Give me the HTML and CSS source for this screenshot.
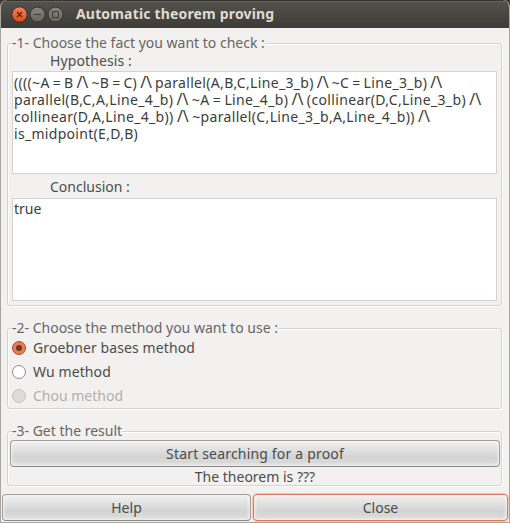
FILE: index.html
```html
<!DOCTYPE html>
<html lang="en">
<head>
<meta charset="utf-8">
<title>Automatic theorem proving</title>
<link rel="stylesheet" href="styles.css">
</head>
<body>
<div class="window">
  <header class="titlebar">
    <svg class="controls" width="54" height="18" viewBox="0 0 54 18">
      <defs>
        <linearGradient id="close" x1="0" y1="0" x2="0" y2="1"><stop offset="0" stop-color="#f4845d"/><stop offset="1" stop-color="#df4a16"/></linearGradient>
        <linearGradient id="grey" x1="0" y1="0" x2="0" y2="1"><stop offset="0" stop-color="#888680"/><stop offset="1" stop-color="#65635c"/></linearGradient>
      </defs>
      <g stroke="#33322e">
        <circle cx="9.5" cy="8.5" r="7.7" fill="url(#close)"/>
        <circle cx="27.5" cy="8.5" r="7.5" fill="url(#grey)"/>
        <circle cx="45.5" cy="8.5" r="7.5" fill="url(#grey)"/>
      </g>
      <path d="M7 6l5 5m0-5l-5 5" stroke="#54210f" stroke-width="1.2"/>
      <path d="M24 8.5h7M42.5 5.5h6v6h-6z" fill="none" stroke="#3c3b37"/>
    </svg>
    <h1>Automatic theorem proving</h1>
  </header>
  <main>
    <section class="group fact">
      <h2><span class="t-fact">-1- Choose the fact you want to check :</span></h2>
      <div class="label"><span class="t-hyp">Hypothesis :</span></div>
      <div class="textbox">
        <div class="l1">((((~A = B <i>/\</i> ~B = C) <i>/\</i> parallel(A,B,C,Line_3_b) <i>/\</i> ~C = Line_3_b) <i>/\</i></div>
        <div class="l2">parallel(B,C,A,Line_4_b) <i>/\</i> ~A = Line_4_b) <i>/\</i> (collinear(D,C,Line_3_b) <i>/\</i></div>
        <div class="l3">collinear(D,A,Line_4_b)) <i>/\</i> ~parallel(C,Line_3_b,A,Line_4_b)) <i>/\</i></div>
        <div class="l4">is_midpoint(E,D,B)</div>
      </div>
      <div class="label second"><span class="t-con">Conclusion :</span></div>
      <div class="textbox"><div>true</div></div>
    </section>
    <section class="group method">
      <h2><span class="t-method">-2- Choose the method you want to use :</span></h2>
      <div class="option"><b class="radio on"></b><span class="t-gro">Groebner bases method</span></div>
      <div class="option"><b class="radio"></b><span class="t-wu">Wu method</span></div>
      <div class="option off"><b class="radio"></b><span class="t-chou">Chou method</span></div>
    </section>
    <section class="group result">
      <h2><span class="t-get">-3- Get the result</span></h2>
      <div class="button start"><span class="t-start">Start searching for a proof</span></div>
      <p><span class="t-the">The theorem is ???</span></p>
    </section>
  </main>
  <footer>
    <div class="button"><span class="t-help">Help</span></div>
    <div class="button focus"><span class="t-close">Close</span></div>
  </footer>
</div>
</body>
</html>
```
FILE: styles.css
```css
* { box-sizing: border-box; }
body { margin: 0; width: 510px; height: 523px; overflow: hidden; background: #3c3b37; font: 14px/17px "Noto Sans", sans-serif; color: #4c4c4c; white-space: nowrap; }
.window { width: 510px; height: 523px; display: flex; flex-direction: column; background: #f2f1f0; border: 1px solid #a9a6a1; border-top: 0; border-radius: 7px 7px 0 0; overflow: hidden; }
.titlebar { height: 28px; flex: none; margin: 0 -1px; padding-left: 10px; display: flex; align-items: center; background: linear-gradient(#53524c, #3c3b37); border-top: 1px solid #35342f; box-shadow: inset 0 1px #656460; }
.controls { flex: none; margin-right: 12px; }
h1 { margin: -2px 0 0; font: bold 14px/18px "Noto Sans", sans-serif; color: #dfdbd2; letter-spacing: .17px; }
main { flex: 1; padding: 15px 7px 0 6px; display: flex; flex-direction: column; }
.group { border: 1px solid #d6d3d0; border-radius: 3px; box-shadow: 1px 1px #fff, inset 1px 1px #fff; padding: 0 4px; }
.fact { height: 263px; }
.method { height: 81px; margin-top: 22px; }
.result { height: 55px; margin-top: 22px; padding: 0 2px; }
h2 { margin: -10px 0 0; height: 18px; font: inherit; line-height: 18px; color: #666; }
h2 span { display: inline-block; background: #f2f1f0; }
.result h2 { padding-left: 2px; }
.label { height: 19px; line-height: 17px; padding-left: 38px; }
.t-hyp { letter-spacing: .1px; }
.second { height: 24px; line-height: 26px; }
.textbox { height: 103px; background: #fff; border: 1px solid #d6d2cf; padding: 2px 1px; color: #3c3c3c; }
.textbox div { height: 17px; }
.second + .textbox { padding-top: 1px; }
.fact { padding-right: 4px; }
.l1 { letter-spacing: .33px; word-spacing: -1px; }
.l2 { letter-spacing: .35px; word-spacing: -.7px; }
.l3 { letter-spacing: .34px; word-spacing: -.7px; }
.l4 { letter-spacing: .3px; }
i { display: inline-block; width: 12px; height: 17px; vertical-align: top; font-style: normal; font-size: 16px; letter-spacing: 0; }
.option { height: 24px; display: flex; align-items: center; gap: 7px; position: relative; top: -1px; }
.option span { margin-top: -2px; }
.t-gro, .t-wu { letter-spacing: .1px; }
.t-start { letter-spacing: .18px; }
.off { color: #b2afac; }
.radio { width: 14px; height: 14px; margin-top: -1px; border: 1px solid #8d8b88; border-radius: 50%; background: #fff; flex: none; }
.radio.on { border-color: #9c4e31; background: radial-gradient(circle, #6b3a29 0 2.7px, #f07b50 3.4px); }
.off .radio { border-color: #c6c4c1; background: #dedcda; }
.button { height: 27px; display: flex; align-items: center; justify-content: center; border: 1px solid #a09d9a; border-bottom-color: #888; border-radius: 4px; background: linear-gradient(#f1f1f1, #d3d3d3 65%, #dedede); box-shadow: inset 0 0 3px 1px #f4f4f4; padding-bottom: 1px; }
.start { margin-right: -1px; }
p { margin: 0; text-align: center; line-height: 19px; padding-left: 1px; }
footer { height: 29px; display: flex; gap: 2px; padding: 0 1px 1px; align-items: flex-end; }
footer .button { flex: 1 1 0; }
.button.focus { border-color: #df7c58; flex: 0 0 255px; box-shadow: 0 0 0 1px #f3c4b3, inset 0 0 3px 1px #f4f4f4; }
```
